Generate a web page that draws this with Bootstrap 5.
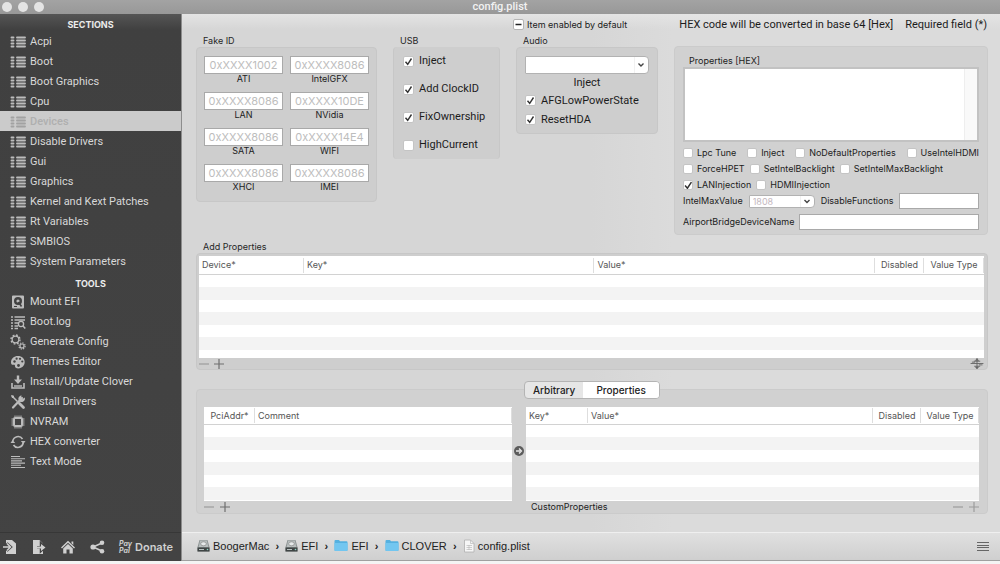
<!DOCTYPE html>
<html lang="en">
<head>
<meta charset="utf-8">
<meta name="viewport" content="width=device-width, initial-scale=1">
<title>config.plist</title>
<link href="https://cdn.jsdelivr.net/npm/bootstrap@5.3.0/dist/css/bootstrap.min.css" rel="stylesheet">
<style>
  body { font-family: Roboto, "Liberation Sans", sans-serif; font-size: 11px; line-height: 14px; color: #1c1c1c; background: #f4f4f4; }
  ul { list-style: none; margin: 0; padding: 0; }
  /* title bar */
  .titlebar { height: 14px; background: linear-gradient(#a3a3a3, #989898); color: #f2f2f2; }
  .titlebar i { width: 10px; height: 10px; border-radius: 50%; background: #e4e4e4; }
  .title-side { flex: 1 1 0; padding-left: 2px; gap: 6px; }
  /* sidebar */
  .sidebar { width: 182px; background: linear-gradient(#555, #404040 16px, #434343); border-right: 1px solid #8d8d8d; }
  .side-head { font-family: Inter, sans-serif; font-size: 9px; font-weight: 700; line-height: 13px; color: #ececec; text-align: center; margin: 0; }
  .side-link { display: flex; align-items: center; gap: 4px; height: 20px; padding: 1px 0 0 10px; color: #d8d8d8; text-decoration: none; }
  .side-link svg { width: 16px; height: 16px; flex: none; color: #bcbcbc; }
  .side-link.active { background: #cbcbcb; color: #afafaf; font-weight: 500; }
  .side-link.active svg { color: #a2a2a2; }
  .side-foot { height: 29px; border-top: 1px solid #373737; color: #d0d0d0; }
  .side-foot button { color: #d0d0d0; line-height: 14px; font-family: Inter, sans-serif; }
  .pay { font-size: 7px; line-height: 7px; font-style: italic; font-weight: 700; text-align: left; }
  .plain { border: 0; background: none; padding: 0; display: flex; align-items: center; color: inherit; }
  /* main pane */
  .pane { min-width: 0; background: linear-gradient(#e4e4e4, #dbdbdb00 15px), linear-gradient(90deg, #d6d6d6 50%, #dbdbdb 60%); }
  .pane-in { padding: 0 12px 0 14px; }
  .topline { height: 21px; display: grid; grid-template-columns: 317px 1fr; }
  .t9 { font-family: Inter, sans-serif; font-size: 9px; line-height: 12px; }
  .groups { display: grid; grid-template-columns: 181px 107px 142px 1fr; gap: 16px; align-items: start; }
  .cap { font-family: Inter, sans-serif; font-size: 9px; line-height: 12px; padding-left: 7px; margin: 0; font-weight: 400; color: #262626; }
  .well { background: #cecece; border: 1px solid #c7c7c7; border-radius: 4px; }
  .well-r { background: #d1d1d1; border-color: #cbcbcb; }
  .ids { display: grid; grid-template-columns: 1fr 1fr; gap: 8px 7px; padding: 8px 7px 9px; text-align: center; }
  .ids label { display: block; font-family: Inter, sans-serif; font-size: 9px; line-height: 10px; }
  .box { border: 1px solid #a9a9a9; border-radius: 0; background: #fff; color: #222; padding: 0 3px; font-family: Inter, sans-serif; font-size: 11px; line-height: 14px; min-height: 0; width: 100%; min-width: 0; display: block; }
  .ids .box { height: 18px; text-align: center; }
  .box::placeholder { color: #bdbdbd; }
  .pop { appearance: none; border: 1px solid #b2b2b2; border-radius: 1px 4px 4px 1px; background: #fff url("data:image/svg+xml,%3Csvg xmlns='http://www.w3.org/2000/svg' width='14' height='16' viewBox='0 0 14 16'%3E%3Cpath d='M0 0V16' stroke='%23e4e4e4'/%3E%3Cpath d='M4.5 6.5 7 9l2.500-2.500' fill='none' stroke='%23444' stroke-width='1.400'/%3E%3C/svg%3E") no-repeat right center; padding: 0 16px 0 3px; display: block; }
  .tick { display: flex; align-items: center; gap: 5px; }
  .tick input.form-check-input { width: 11px; height: 11px; margin: 0; flex: none; border: 1px solid #c4c4c4; border-radius: 2px; background-color: #fff; background-size: 9px 9px; }
  .tick input:checked { background-image: url("data:image/svg+xml,%3Csvg xmlns='http://www.w3.org/2000/svg' viewBox='0 0 9 9'%3E%3Cpath d='M1.500 4.800 3.700 7.300 7.500 1.500' fill='none' stroke='%23333' stroke-width='1.400'/%3E%3C/svg%3E") !important; }
  .tick input:indeterminate { background-color: #fff !important; border-color: #b4b4b4 !important; background-image: url("data:image/svg+xml,%3Csvg xmlns='http://www.w3.org/2000/svg' viewBox='0 0 9 9'%3E%3Cpath d='M1.500 4.500h6' stroke='%23222' stroke-width='1.500'/%3E%3C/svg%3E") !important; }
  .usb .tick { height: 28px; padding-left: 9px; }
  .usb { border-width: 0 1px; }
  .audio { padding: 8px 8px 4px; }
  .audio .tick { height: 19px; }
  .props { margin-top: 11px; padding: 8px 8px 4px; }
  .props .tick { height: 16px; gap: 4px; }
  .props .tick input.form-check-input { width: 10px; height: 10px; }
  .hexarea { display: block; width: 100%; height: 75px; resize: none; border: 2px solid #c2c2c2; border-radius: 0; padding: 2px 16px 2px 3px; background: linear-gradient(90deg, #eee 1px, #f9f9f9 1px) right / 13px 100% no-repeat #fff; }
  /* tables */
  .grid-t { width: 100%; table-layout: fixed; border-collapse: separate; border-spacing: 0; background: #fff; color: #555; font-family: Inter, sans-serif; font-size: 9px; line-height: 12px; }
  .grid-t th { height: 19px; padding: 0 0 0 3px; font-weight: 400; border-bottom: 1px solid #d2d2d2; white-space: nowrap; background: linear-gradient(#dedede, #dedede) right / 1px 15px no-repeat; }
  .grid-t th.mid { text-align: center; padding: 0; }
  .grid-t td { height: 12px; padding: 0; }
  .grid-t tr:nth-child(even) td { height: 13px; background: #f3f3f3; }
  .grid-t tr.rest td { height: 8px; background: #fff; }
  .grid-low th { height: 18px; }
  .grid-low tr.rest td { height: 1px; }
  .big-well { padding: 2px 3px 0 2px; }
  .foot-row { height: 11px; display: flex; align-items: center; font-family: Inter, sans-serif; font-size: 9px; line-height: 11px; }
  .sq { color: #6f6f6f; }
  .sq.off { color: #9c9c9c; }
  .tabs { height: 18px; width: 136px; margin: 11px auto -10px; position: relative; border-radius: 4px; overflow: hidden; border: 1px solid #b4b4b4; background: #e6e6e6; }
  .tabs button { flex: 1 1 0; justify-content: center; font-family: Inter, sans-serif; font-size: 10px; font-weight: 500; color: #222; }
  .tabs button.active { background: #fff; flex-grow: 1.3; }
  .low-well { padding: 17px 8px 1px 7px; }
  .pair { display: grid; grid-template-columns: 308fr 14px 453fr; }
  .jump { margin-bottom: 6px; }
  /* path bar */
  .pathbar { height: 29px; border-top: 1px solid #efefef; background: linear-gradient(#e0e0e0, #cfcfcf); padding: 0 11px 2px 15px; border-bottom: 1px solid #a0a0a0; font-family: "Liberation Sans", sans-serif; }
  .pathbar a { display: flex; align-items: center; gap: 3px; color: #222; text-decoration: none; }
  .chev { width: 16px; text-align: center; font-weight: 700; }
</style>
</head>
<body>
<svg width="0" height="0" class="position-absolute" aria-hidden="true">
  <defs>
    <symbol id="i-list" viewBox="0 0 16 16"><path d="M1.500 3.500h2M1.500 6.500h2M1.500 9.500h2M1.500 12.500h2M7 3.500h8M7 6.500h8M7 9.500h8M7 12.500h8" stroke="currentColor" stroke-width="1.900" stroke-linecap="round"/></symbol>
    <symbol id="i-plus" viewBox="0 0 10 10"><path d="M0 5h10M5 0v10" stroke="currentColor" stroke-width="1.200"/></symbol>
    <symbol id="i-minus" viewBox="0 0 10 10"><path d="M0 5h10" stroke="currentColor" stroke-width="1.200"/></symbol>
    <symbol id="i-drive" viewBox="0 0 13 14"><path d="M2.500 1h8L12.500 8v4.500h-12V8z" fill="#8e9494" /><path d="M3.200 1.500h6.600L11.300 8H1.700z" fill="#b9bfbf"/><ellipse cx="6.500" cy="4.800" rx="2.800" ry="2" fill="#e6eaea" stroke="#777" stroke-width=".6"/><path d="M.5 8.500h12v4h-12z" fill="#3f4545"/><path d="M2 10.500h5" stroke="#b8c0c0"/><circle cx="10.500" cy="10.500" r=".8" fill="#8fd6c4"/></symbol>
    <symbol id="i-folder" viewBox="0 0 14 13"><path d="M.5 2q0-1 1-1h3.500l1 1.200h6.500q1 0 1 1V11q0 1-1 1h-11q-1 0-1-1z" fill="#55b1e0"/><path d="M.5 4h13v7.200q0 .8-1 .8h-11q-1 0-1-.8z" fill="#72c6f0"/></symbol>
  </defs>
</svg>

<div class="d-flex flex-column min-vh-100">
  <header class="titlebar d-flex align-items-center flex-shrink-0">
    <div class="title-side d-flex"><i></i><i></i><i></i></div>
    <div class="fw-medium">config.plist</div>
    <div class="title-side"></div>
  </header>

  <div class="d-flex flex-grow-1">
    <nav class="sidebar d-flex flex-column flex-shrink-0">
      <h2 class="side-head" style="padding:4px 0 0">SECTIONS</h2>
      <ul>
        <li><a class="side-link" href="#"><svg><use href="#i-list"/></svg>Acpi</a></li>
        <li><a class="side-link" href="#"><svg><use href="#i-list"/></svg>Boot</a></li>
        <li><a class="side-link" href="#"><svg><use href="#i-list"/></svg>Boot Graphics</a></li>
        <li><a class="side-link" href="#"><svg><use href="#i-list"/></svg>Cpu</a></li>
        <li><a class="side-link active" href="#"><svg><use href="#i-list"/></svg>Devices</a></li>
        <li><a class="side-link" href="#"><svg><use href="#i-list"/></svg>Disable Drivers</a></li>
        <li><a class="side-link" href="#"><svg><use href="#i-list"/></svg>Gui</a></li>
        <li><a class="side-link" href="#"><svg><use href="#i-list"/></svg>Graphics</a></li>
        <li><a class="side-link" href="#"><svg><use href="#i-list"/></svg>Kernel and Kext Patches</a></li>
        <li><a class="side-link" href="#"><svg><use href="#i-list"/></svg>Rt Variables</a></li>
        <li><a class="side-link" href="#"><svg><use href="#i-list"/></svg>SMBIOS</a></li>
        <li><a class="side-link" href="#"><svg><use href="#i-list"/></svg>System Parameters</a></li>
      </ul>
      <h2 class="side-head" style="padding:6px 0 1px">TOOLS</h2>
      <ul>
        <li><a class="side-link" href="#"><svg viewBox="0 0 16 16"><path d="M3 1.500h10a1 1 0 0 1 1 1v11a1 1 0 0 1-1 1H3a1 1 0 0 1-1-1v-11a1 1 0 0 1 1-1z" fill="currentColor"/><circle cx="8" cy="7" r="4" fill="#424242"/><circle cx="8" cy="7" r="1.600" fill="currentColor"/><path d="M8.500 8l3 4.500" stroke="#424242" stroke-width="1.600"/><path d="M4 12.500h3" stroke="#424242"/></svg>Mount EFI</a></li>
        <li><a class="side-link" href="#"><svg viewBox="0 0 16 16" fill="none" stroke="currentColor"><path d="M1 3h2M4.500 3H15M1 6h2M4.500 6H15M1 9h2M4.500 9H8M1 12h2M4.500 12H8M1 14.500h2M4.500 14.500H8" stroke-width="1.400"/><circle cx="11" cy="10" r="2.600" stroke-width="1.300"/><path d="M13 12l2.300 2.500" stroke-width="1.600"/></svg>Boot.log</a></li>
        <li><a class="side-link" href="#"><svg viewBox="0 0 16 16" fill="none" stroke="currentColor"><circle cx="5.500" cy="5.500" r="3.300" stroke-width="1.200"/><circle cx="5.500" cy="5.500" r="4.500" stroke-width="1.400" stroke-dasharray="1.770 1.770"/><circle cx="12" cy="12" r="2" stroke-width="1.200"/><circle cx="12" cy="12" r="3.100" stroke-width="1.200" stroke-dasharray="1.220 1.220"/></svg>Generate Config</a></li>
        <li><a class="side-link" href="#"><svg viewBox="0 0 16 16"><path d="M8 2C4 2 1 4.700 1 8.200c0 2 .9 2.600 2 2.500 1.300-.2 2.200.1 2 1.400-.2 1.500 1.200 2.300 3.300 2.300 3.700 0 6.400-2.900 6.400-6.300C14.700 4.600 11.900 2 8 2z" fill="currentColor"/><g fill="#424242"><circle cx="4.500" cy="7.500" r="1.200"/><circle cx="6.600" cy="4.700" r="1.100"/><circle cx="10" cy="4.800" r="1.100"/><circle cx="12.300" cy="7.500" r="1.100"/><circle cx="8.500" cy="11.500" r="1.400"/></g></svg>Themes Editor</a></li>
        <li><a class="side-link" href="#"><svg viewBox="0 0 16 16"><path d="M6.800 1.500h2.400v4H12L8 10 4 5.500h2.800z" fill="currentColor"/><path d="M2 9v5h12V9" fill="none" stroke="currentColor" stroke-width="1.600"/><path d="M4 12h8" stroke="currentColor" stroke-width="1.400"/></svg>Install/Update Clover</a></li>
        <li><a class="side-link" href="#"><svg viewBox="0 0 16 16"><path d="M3 13.500L12 4" stroke="currentColor" stroke-width="2.200" stroke-linecap="round"/><path d="M14.700 3.600A3.300 3.300 0 1 1 11.600 1.500L11 4l1.300 1.200z" fill="currentColor"/><path d="M2 2l5.500 5.500" stroke="currentColor" stroke-width="1.500"/><path d="M1 1l3 .8L4 4 2 4z" fill="currentColor"/><path d="M9.500 9.500l4 4" stroke="currentColor" stroke-width="2.800" stroke-linecap="round"/></svg>Install Drivers</a></li>
        <li><a class="side-link" href="#"><svg viewBox="0 0 16 16" fill="none" stroke="currentColor"><rect x="4" y="4" width="8" height="8" rx="1" stroke-width="2"/><path d="M5 1.500v2M7 1.500v2M9 1.500v2M11 1.500v2M5 12.500v2M7 12.500v2M9 12.500v2M11 12.500v2M1.500 5h2M1.500 7h2M1.500 9h2M1.500 11h2M12.500 5h2M12.500 7h2M12.500 9h2M12.500 11h2" stroke-width="1"/></svg>NVRAM</a></li>
        <li><a class="side-link" href="#"><svg viewBox="0 0 16 16"><path d="M2.800 7A5.300 5.300 0 0 1 12.500 5M13.200 9A5.300 5.300 0 0 1 3.500 11" fill="none" stroke="currentColor" stroke-width="1.600"/><path d="M10.800 7h4.700L13.400 10zM.5 9h4.700L2.600 6z" fill="currentColor"/></svg>HEX converter</a></li>
        <li><a class="side-link" href="#"><svg viewBox="0 0 16 16"><path d="M1 2.500h9M1 4.700h14M1 6.900h11M1 9.100h14M1 11.300h10M1 13.500h14" stroke="currentColor" stroke-width="1.100"/></svg>Text Mode</a></li>
      </ul>
      <div class="side-foot mt-auto d-flex align-items-center">
        <button class="plain" style="margin-left:3px" aria-label="Import"><svg width="14" height="14" viewBox="0 0 14 14"><path d="M3 0h6l4 3.500V14H3v-3l4-4-4-4z" fill="currentColor"/><path d="M0 7h6.500M3.500 3.500L7.500 7l-4 3.500" fill="none" stroke="#434343" stroke-width="3"/><path d="M0 7h6.500M4 3.500L7.500 7 4 10.500" fill="none" stroke="currentColor" stroke-width="1.500"/></svg></button>
        <button class="plain" style="margin-left:15px" aria-label="Export"><svg width="14" height="14" viewBox="0 0 14 14"><path d="M1 0h6.500L11 3.500V14H1z" fill="currentColor"/><path d="M5 7.300h5M9 3.500l4 3.800-4 3.700z" fill="#434343" stroke="#434343" stroke-width="2.500"/><path d="M5 6.500h4V4l4.500 3.500L9 11V8.500H5z" fill="currentColor"/></svg></button>
        <button class="plain" style="margin-left:15px" aria-label="Home"><svg width="14" height="14" viewBox="0 0 14 14"><path d="M7 .8L14 7.500l-1 .9L7 2.800 1 8.400l-1-.9z" fill="currentColor"/><path d="M10.500 1.500h1.800V5L10.500 3.300zM2.200 8.500L7 4l4.800 4.500V13.500H8.500V9.500h-3v4H2.200z" fill="currentColor"/></svg></button>
        <button class="plain" style="margin-left:15px" aria-label="Share"><svg width="15" height="14" viewBox="0 0 15 14"><path d="M12 3L3 7l9 4" fill="none" stroke="currentColor" stroke-width="1.500"/><circle cx="3" cy="7" r="2.600" fill="currentColor"/><circle cx="12" cy="2.800" r="2.300" fill="currentColor"/><circle cx="12" cy="11.200" r="2.300" fill="currentColor"/></svg></button>
        <button class="plain" style="margin-left:14px;gap:3px"><span class="pay">Pay<br>Pal</span><b class="fw-semibold">Donate</b></button>
      </div>
    </nav>

    <main class="pane flex-grow-1 d-flex flex-column">
      <div class="pane-in">
        <div class="topline align-items-center">
          <div></div>
          <div class="d-flex justify-content-between align-items-center">
            <label class="tick t9" style="gap:3px"><input class="form-check-input" type="checkbox" id="allItems">Item enabled by default</label>
            <div class="d-flex" style="gap:12px;padding-right:1px"><span>HEX code will be converted in base 64 [Hex]</span><span>Required field (*)</span></div>
          </div>
        </div>

        <div class="groups">
          <section>
            <h3 class="cap">Fake ID</h3>
            <div class="well ids">
              <div><input class="box" id="ati" placeholder="0xXXXX1002"><label for="ati">ATI</label></div>
              <div><input class="box" id="igfx" placeholder="0xXXXX8086"><label for="igfx">IntelGFX</label></div>
              <div><input class="box" id="lan" placeholder="0xXXXX8086"><label for="lan">LAN</label></div>
              <div><input class="box" id="nv" placeholder="0xXXXX10DE"><label for="nv">NVidia</label></div>
              <div><input class="box" id="sata" placeholder="0xXXXX8086"><label for="sata">SATA</label></div>
              <div><input class="box" id="wifi" placeholder="0xXXXX14E4"><label for="wifi">WIFI</label></div>
              <div><input class="box" id="xhci" placeholder="0xXXXX8086"><label for="xhci">XHCI</label></div>
              <div><input class="box" id="imei" placeholder="0xXXXX8086"><label for="imei">IMEI</label></div>
            </div>
          </section>
          <section>
            <h3 class="cap">USB</h3>
            <div class="well usb">
              <label class="tick"><input class="form-check-input" type="checkbox" checked>Inject</label>
              <label class="tick"><input class="form-check-input" type="checkbox" checked>Add ClockID</label>
              <label class="tick"><input class="form-check-input" type="checkbox" checked>FixOwnership</label>
              <label class="tick"><input class="form-check-input" type="checkbox">HighCurrent</label>
            </div>
          </section>
          <section>
            <h3 class="cap">Audio</h3>
            <div class="well audio">
              <select class="pop w-100" id="audioInject" style="height:18px"><option></option></select>
              <label for="audioInject" class="d-block text-center" style="line-height:17px">Inject</label>
              <label class="tick"><input class="form-check-input" type="checkbox" checked>AFGLowPowerState</label>
              <label class="tick"><input class="form-check-input" type="checkbox" checked>ResetHDA</label>
            </div>
          </section>
          <section class="well well-r props t9">
            <label for="hex" class="d-block" style="padding-left:6px">Properties [HEX]</label>
            <textarea class="hexarea" id="hex"></textarea>
            <div class="d-flex justify-content-between" style="padding-top:3px">
              <label class="tick"><input class="form-check-input" type="checkbox">Lpc Tune</label>
              <label class="tick"><input class="form-check-input" type="checkbox">Inject</label>
              <label class="tick"><input class="form-check-input" type="checkbox">NoDefaultProperties</label>
              <label class="tick"><input class="form-check-input" type="checkbox">UseIntelHDMI</label>
            </div>
            <div class="d-flex" style="gap:5px">
              <label class="tick"><input class="form-check-input" type="checkbox">ForceHPET</label>
              <label class="tick"><input class="form-check-input" type="checkbox">SetIntelBacklight</label>
              <label class="tick"><input class="form-check-input" type="checkbox">SetIntelMaxBacklight</label>
            </div>
            <div class="d-flex" style="gap:5px">
              <label class="tick"><input class="form-check-input" type="checkbox" checked>LANInjection</label>
              <label class="tick"><input class="form-check-input" type="checkbox">HDMIInjection</label>
            </div>
            <div class="d-flex align-items-center" style="gap:6px">
              <label for="imax">IntelMaxValue</label>
              <select class="pop t9" id="imax" style="width:66px;height:13px;color:#c4b8c0"><option>1808</option></select>
              <label for="disf">DisableFunctions</label>
              <input class="box flex-grow-1" id="disf" style="height:16px;flex-basis:0">
            </div>
            <div class="d-flex align-items-center" style="gap:5px;padding-top:5px">
              <label for="air">AirportBridgeDeviceName</label>
              <input class="box flex-grow-1" id="air" style="height:16px;flex-basis:0">
            </div>
          </section>
        </div>

        <h3 class="cap" style="padding-top:6px">Add Properties</h3>
        <section class="well big-well">
          <table class="grid-t">
            <colgroup><col style="width:105px"><col style="width:37%"><col><col style="width:49px"><col style="width:60px"></colgroup>
            <thead><tr><th>Device*</th><th>Key*</th><th>Value*</th><th class="mid">Disabled</th><th class="mid">Value Type</th></tr></thead>
            <tbody>
              <tr><td colspan="5"></td></tr><tr><td colspan="5"></td></tr><tr><td colspan="5"></td></tr><tr><td colspan="5"></td></tr><tr><td colspan="5"></td></tr><tr><td colspan="5"></td></tr><tr class="rest"><td colspan="5"></td></tr>
            </tbody>
          </table>
          <div class="foot-row justify-content-between">
            <div class="d-flex" style="gap:5px">
              <button class="plain sq off" aria-label="Remove"><svg width="10" height="10"><use href="#i-minus"/></svg></button>
              <button class="plain sq" aria-label="Add"><svg width="10" height="10"><use href="#i-plus"/></svg></button>
            </div>
            <button class="plain sq" aria-label="Resize"><svg width="14" height="11" viewBox="0 0 14 12"><path d="M0 6h14M7 0v12M1.500 4.500h3.500M9 7.500h4M3.500 3.500h7M4 9h6.500" stroke="#666" stroke-width="1"/><path d="M4.500 3L7 .5 9.500 3zM4.500 9.500L7 12l2.500-2.500z" fill="#666"/></svg></button>
          </div>
        </section>

        <div class="tabs d-flex z-1" role="tablist">
          <button class="plain" role="tab">Arbitrary</button>
          <button class="plain active" role="tab">Properties</button>
        </div>
        <section class="well well-r low-well">
          <div class="pair align-items-center">
            <table class="grid-t grid-low">
              <colgroup><col style="width:51px"><col></colgroup>
              <thead><tr><th class="mid">PciAddr*</th><th>Comment</th></tr></thead>
              <tbody>
                <tr><td colspan="2"></td></tr><tr><td colspan="2"></td></tr><tr><td colspan="2"></td></tr><tr><td colspan="2"></td></tr><tr><td colspan="2"></td></tr><tr><td colspan="2"></td></tr><tr class="rest"><td colspan="2"></td></tr>
              </tbody>
            </table>
            <button class="plain justify-content-center jump" aria-label="Show properties"><svg width="10" height="10" viewBox="0 0 10 10"><circle cx="5" cy="5" r="5" fill="#5c5c5c"/><path d="M2 5h4.500M5 2.500L7.500 5 5 7.500" fill="none" stroke="#e6e6e6" stroke-width="1.300"/></svg></button>
            <table class="grid-t grid-low">
              <colgroup><col style="width:62px"><col><col style="width:48px"><col style="width:58px"></colgroup>
              <thead><tr><th>Key*</th><th>Value*</th><th class="mid">Disabled</th><th class="mid">Value Type</th></tr></thead>
              <tbody>
                <tr><td colspan="4"></td></tr><tr><td colspan="4"></td></tr><tr><td colspan="4"></td></tr><tr><td colspan="4"></td></tr><tr><td colspan="4"></td></tr><tr><td colspan="4"></td></tr><tr class="rest"><td colspan="4"></td></tr>
              </tbody>
            </table>
          </div>
          <div class="pair">
            <div class="foot-row" style="gap:6px">
              <button class="plain sq off" aria-label="Remove"><svg width="10" height="10"><use href="#i-minus"/></svg></button>
              <button class="plain sq" aria-label="Add"><svg width="10" height="10"><use href="#i-plus"/></svg></button>
            </div>
            <div></div>
            <div class="foot-row justify-content-between" style="padding-left:5px">
              <span>CustomProperties</span>
              <div class="d-flex" style="gap:6px">
                <button class="plain sq off" aria-label="Remove"><svg width="10" height="10"><use href="#i-minus"/></svg></button>
                <button class="plain sq off" aria-label="Add"><svg width="10" height="10"><use href="#i-plus"/></svg></button>
              </div>
            </div>
          </div>
        </section>
      </div>

      <footer class="pathbar mt-auto d-flex align-items-center">
        <a href="#"><svg width="13" height="14"><use href="#i-drive"/></svg>BoogerMac</a><span class="chev">›</span>
        <a href="#"><svg width="13" height="14"><use href="#i-drive"/></svg>EFI</a><span class="chev">›</span>
        <a href="#"><svg width="14" height="13"><use href="#i-folder"/></svg>EFI</a><span class="chev">›</span>
        <a href="#"><svg width="14" height="13"><use href="#i-folder"/></svg>CLOVER</a><span class="chev">›</span>
        <a href="#"><svg width="12" height="14" viewBox="0 0 12 14"><path d="M1.500 1h6L11 4.500V13H1.500z" fill="#f6f6f6" stroke="#b0b0b0" stroke-width=".8"/><path d="M7.500 1v3.500H11M3.500 6.500h5.500M3.500 8.500h5.500M3.500 10.500h5.500M6 6v5" fill="none" stroke="#bbb" stroke-width=".7"/></svg>config.plist</a>
        <button class="plain ms-auto" aria-label="Menu"><svg width="12" height="10" viewBox="0 0 12 10"><path d="M0 1.500h12M0 4.500h12M0 6.500h12M0 9.500h12" stroke="#666" stroke-width="1"/></svg></button>
      </footer>
    </main>
  </div>
  <div class="flex-shrink-0" style="height:3px"></div>
</div>
<script src="https://cdn.jsdelivr.net/npm/bootstrap@5.3.0/dist/js/bootstrap.bundle.min.js"></script>
<script>document.getElementById('allItems').indeterminate = true;</script>
</body>
</html>
